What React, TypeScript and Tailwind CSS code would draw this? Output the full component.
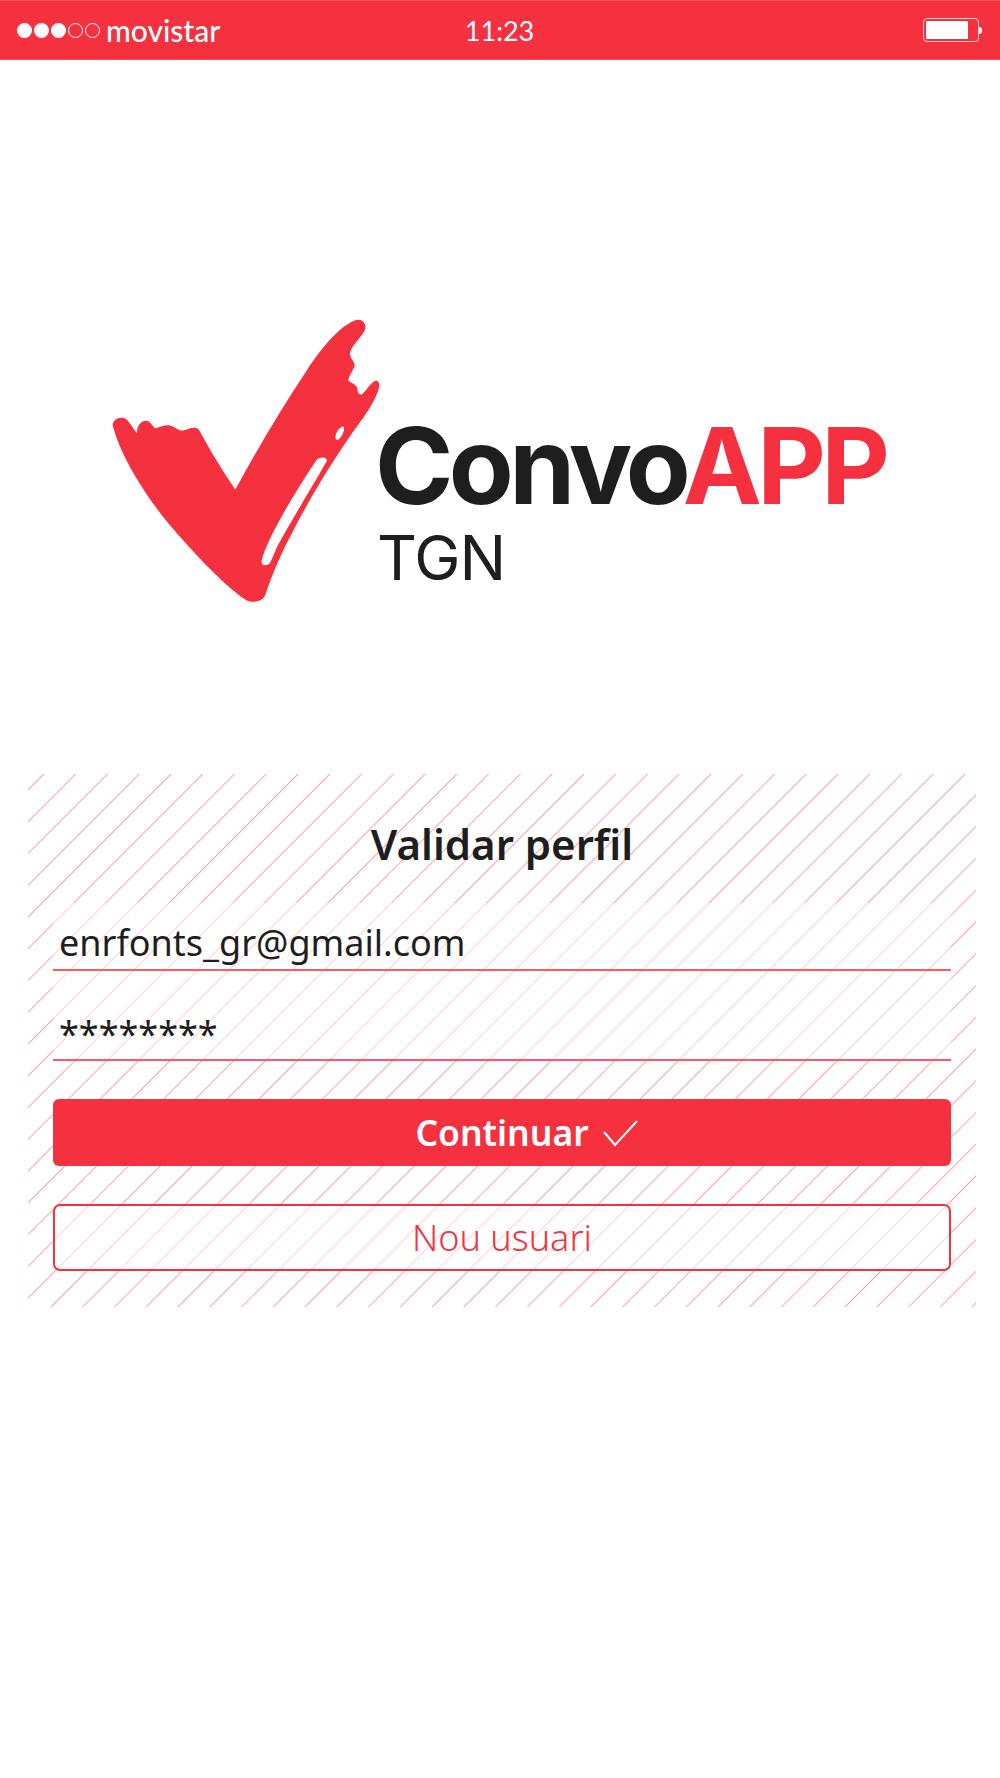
import React from 'react';

const RED = 'bg-[#f53140]';

const Logo = () => (
  <svg viewBox="30 50 825 860" width="275" height="287" className="shrink-0">
    <path
      fill="#f53140"
      d="M38 375C38 358 55 350 70 352C85 355 92 375 110 397C112 385 115 365 135 361C150 358 155 375 165 383C180 382 190 372 210 375C225 378 235 392 250 390C265 387 285 375 297 388C330 450 370 515 406 567C470 450 540 330 620 210C670 135 720 75 770 58C790 55 800 72 795 88C785 110 760 130 750 155C748 170 760 180 764 190C765 205 745 225 745 240C755 250 770 250 772 265C773 275 775 283 785 282C800 270 815 240 830 240C842 245 838 265 830 282C815 320 780 365 755 400C700 480 640 575 585 680C550 745 520 810 497 880C490 905 460 908 440 900C370 855 260 735 190 650C120 560 60 460 38 375Z"
    />
    <path fill="#fff" d="M706 408C708 395 718 380 730 377C737 385 725 412 714 418C708 418 705 415 706 408Z" />
    <path fill="#fff" d="M485 780C498 725 565 605 650 478C660 468 682 468 680 482C652 532 586 640 536 730C524 752 518 775 508 790C496 798 483 794 485 780Z" />
  </svg>
);

const StatusBar = () => (
  <div className={`flex h-[60px] items-center border-y border-[#fb5563] ${RED} pr-[18px] pl-[17px] font-['Lato',sans-serif] text-[27px] text-white`}>
    <div className="flex flex-1 items-center">
      <div className="flex gap-[2px]">
        <span className="h-[15px] w-[15px] rounded-full bg-white" />
        <span className="h-[15px] w-[15px] rounded-full bg-white" />
        <span className="h-[15px] w-[15px] rounded-full bg-white" />
        <span className="h-[15px] w-[15px] rounded-full border border-white" />
        <span className="h-[15px] w-[15px] rounded-full border border-white" />
      </div>
      <span className="ml-[6px] text-[30px] leading-none font-medium">movistar</span>
    </div>
    <span className="leading-none">11:23</span>
    <div className="flex flex-1 items-center justify-end">
      <div className="h-[24px] w-[56px] rounded-[4px] border border-[#ffd0d4] p-[2px]">
        <div className="h-full w-[42px] rounded-[1px] bg-white" />
      </div>
      <div className="h-[7px] w-[3px] rounded-r-full bg-white" />
    </div>
  </div>
);

export default function App() {
  return (
    <div className="h-[1778px] w-[1000px] bg-white font-['Noto_Sans',sans-serif] text-[#1e1e1e]">
      <StatusBar />

      {/* Logo */}
      <div className="flex h-[714px] items-start pt-[257px] pl-[110px]">
        <Logo />
        <div className="-ml-[10px] pt-[97px] font-['Inter',sans-serif]">
          <div className="h-[104px] text-[106px] leading-[104px] font-bold tracking-[-4.6px]">
            Convo<span className="text-[#f53140]">APP</span>
          </div>
          <div className="mt-[8px] ml-[2px] text-[62px] leading-[64px] tracking-[-1px]">TGN</div>
        </div>
      </div>

      {/* Form panel */}
      <div className="mx-[28px] h-[533px] w-[948px] bg-[repeating-linear-gradient(135deg,transparent_0,transparent_10.3px,#ffa0a8_11.3px,transparent_12.3px,transparent_22.46px)] px-[25px]">
        <div className="flex h-[129px] items-start justify-center pt-[44px] text-[42px] leading-[52px] font-semibold">
          Validar perfil
        </div>
        <div className="h-[68px] border-b-2 border-[#fb5a68] bg-white/50 pt-[15px] pl-[6px] text-[36px] leading-[50px]">
          enrfonts_gr@gmail.com
        </div>
        <div className="h-[90px] border-b-2 border-[#fb5a68] bg-white/50 pt-[38px] pl-[6px] text-[36px] leading-[50px]">
          ********
        </div>
        <button className={`mt-[38px] flex h-[67px] w-full items-center justify-center rounded-[6px] ${RED} text-[35.5px] font-semibold text-white`}>
          <span className="relative">
            Continuar
            <svg className="absolute top-[14px] left-full ml-[13px]" width="36" height="27" viewBox="0 0 36 27" fill="none" stroke="#fff" strokeWidth="2">
              <path d="M2 12L13 25L35 1" />
            </svg>
          </span>
        </button>
        <button className="mt-[38px] flex h-[67px] w-full items-center justify-center rounded-[7px] border-2 border-[#f53140] bg-white/50 text-[36px] font-light text-[#f53140]">
          Nou usuari
        </button>
      </div>
    </div>
  );
}
